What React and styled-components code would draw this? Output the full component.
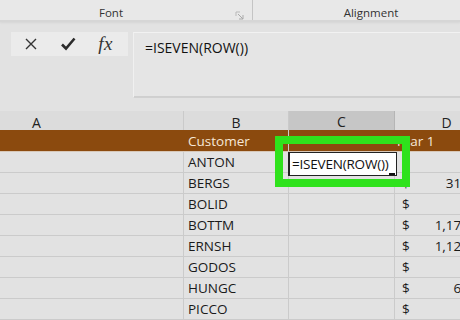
import React from "react";
import styled, { createGlobalStyle } from "styled-components";

const GlobalStyle = createGlobalStyle`
  html, body { margin: 0; padding: 0; background: #e2e2e2; overflow: hidden; }
  * { box-sizing: border-box; }
`;

const Page = styled.div`
  width: 460px;
  height: 320px;
  display: flex;
  flex-direction: column;
  font-family: "Open Sans", "Liberation Sans", sans-serif;
  background: #e2e2e2;
  overflow: hidden;
`;

const Ribbon = styled.div`
  height: 22px;
  display: grid;
  grid-template-columns: 253px 236px 1fr;
  background: #e8e8e8;
  border-bottom: 2px solid #d6d6d6;
  box-shadow: 0 1px 2px rgba(0,0,0,0.06);
`;

const Group = styled.div`
  position: relative;
  display: flex;
  align-items: center;
  justify-content: center;
  padding: 4px ${(p) => p.$shift || 0}px 0 0;
  font-size: 11.5px;
  color: #333;
  border-right: ${(p) => (p.$divider ? "1px solid #c4c4c4" : "none")};
`;

const Launcher = styled.svg`
  position: absolute;
  right: 8px;
  top: 11px;
`;

const FormulaArea = styled.div`
  height: 89px;
  display: flex;
  align-items: flex-start;
  gap: 5px;
  padding: 10px 0 0 11px;
`;

const Buttons = styled.div`
  width: 117px;
  height: 24px;
  background: #ebebeb;
  display: flex;
  align-items: center;
  justify-content: space-around;
  padding: 0 4px 0 2px;
`;

const FxLabel = styled.span`
  font-family: "Liberation Serif", "DejaVu Serif", serif;
  font-style: italic;
  font-size: 19px;
  line-height: 20px;
  color: #333;
  letter-spacing: 0.5px;
`;

const FormulaInput = styled.div`
  flex: 1;
  height: 66px;
  margin-right: -4px;
  background: #e5e5e5;
  border: 1px solid #d0d0d0;
  border-top-color: #f2f2f2;
  border-left-color: #f0f0f0;
  box-shadow: inset 0 -1px 0 #cfcfcf;
  font-size: 14px;
  color: #111;
  padding: 5px 0 0 11px;
`;

const Sheet = styled.div`
  position: relative;
  flex: 1;
  display: flex;
  flex-direction: column;
`;

const Row = styled.div`
  display: grid;
  grid-template-columns: 184px 105px 106px 104px;
  height: ${(p) => p.$h || 21}px;
  background: ${(p) => p.$bg || "#e2e2e2"};
  border-bottom: 1px solid ${(p) => p.$line || "#cbcbcb"};
`;

const HeadCell = styled.div`
  display: flex;
  align-items: center;
  justify-content: ${(p) => (p.$left ? "flex-start" : "center")};
  padding: 1px 0 0 ${(p) => p.$pad || 0}px;
  font-size: 14px;
  color: #222;
  background: ${(p) => (p.$active ? "#c6c6c6" : "transparent")};
  border-right: 1px solid ${(p) => (p.$active ? "#b5b5b5" : "#cacaca")};
  border-bottom: ${(p) => (p.$active ? "2px solid #8a8a8a" : "none")};
`;

const Cell = styled.div`
  display: flex;
  align-items: center;
  justify-content: ${(p) => (p.$split ? "space-between" : "flex-start")};
  padding: 0 ${(p) => p.$rpad || 0}px 0 ${(p) => p.$pad ?? 4}px;
  font-size: 13.5px;
  color: ${(p) => p.$color || "#1a1a1a"};
  border-right: 1px solid ${(p) => p.$line || "#cbcbcb"};
  white-space: nowrap;
  overflow: hidden;
`;

const Highlight = styled.div`
  position: absolute;
  left: 275px;
  top: 25px;
  width: 135px;
  height: 51px;
  border: 8px solid #2fe21c;
  pointer-events: none;
`;

const Editor = styled.div`
  position: absolute;
  left: 288px;
  top: 41px;
  width: 109px;
  height: 24px;
  background: #ffffff;
  border: 1px solid #222;
  border-left-width: 2px;
  font-size: 13.5px;
  letter-spacing: -0.2px;
  color: #111;
  padding: 1px 0 0 2px;
  line-height: 20px;
  white-space: nowrap;
  overflow: hidden;
`;

const Caret = styled.span`
  position: absolute;
  right: 1px;
  bottom: 0;
  width: 6px;
  height: 2px;
  background: #111;
`;

const rows = [
  ["ANTON", "", ""],
  ["BERGS", "$", "318.00"],
  ["BOLID", "$", ""],
  ["BOTTM", "$", "1,176.00"],
  ["ERNSH", "$", "1,122.00"],
  ["GODOS", "$", ""],
  ["HUNGC", "$", "62.00"],
  ["PICCO", "$", ""],
];

export default function App() {
  return (
    <Page>
      <GlobalStyle />
      <Ribbon>
        <Group $divider $shift={30}>
          Font
          <Launcher width="9" height="9" viewBox="0 0 9 9">
            <path d="M1 1h4M1 1v4" stroke="#b9b9b9" strokeWidth="1" fill="none" />
            <path d="M3 3l5 5M8 4v4H4" stroke="#a9a9a9" strokeWidth="1" fill="none" />
          </Launcher>
        </Group>
        <Group>Alignment</Group>
      </Ribbon>
      <FormulaArea>
        <Buttons>
          <svg width="14" height="14" viewBox="0 0 14 14">
            <path d="M2 2l10 10M12 2L2 12" stroke="#333" strokeWidth="1.4" />
          </svg>
          <svg width="16" height="14" viewBox="0 0 16 14">
            <path d="M2 7.5l4 4 8.5-10" stroke="#2b2b2b" strokeWidth="2.6" fill="none" />
          </svg>
          <FxLabel>fx</FxLabel>
        </Buttons>
        <FormulaInput>=ISEVEN(ROW())</FormulaInput>
      </FormulaArea>
      <Sheet>
        <Row $h={19} $bg="#dcdcdc" $line="#dcdcdc">
          <HeadCell $left $pad={32}>A</HeadCell>
          <HeadCell>B</HeadCell>
          <HeadCell $active>C</HeadCell>
          <HeadCell>D</HeadCell>
        </Row>
        <Row $h={22} $bg="#8b4a0e" $line="#d8c8b8">
          <Cell $line="#8b4a0e" />
          <Cell $color="#f6e7d7">Customer</Cell>
          <Cell $line="#8b4a0e" />
          <Cell $color="#f6e7d7" $pad={0}>Year 1</Cell>
        </Row>
        {rows.map(([name, sign, num]) => (
          <Row key={name}>
            <Cell />
            <Cell>{name}</Cell>
            <Cell />
            <Cell $split $pad={7} $rpad={10}>
              <span>{sign}</span>
              <span>{num}</span>
            </Cell>
          </Row>
        ))}
        <Highlight />
        <Editor>
          =ISEVEN(ROW())
          <Caret />
        </Editor>
      </Sheet>
    </Page>
  );
}
